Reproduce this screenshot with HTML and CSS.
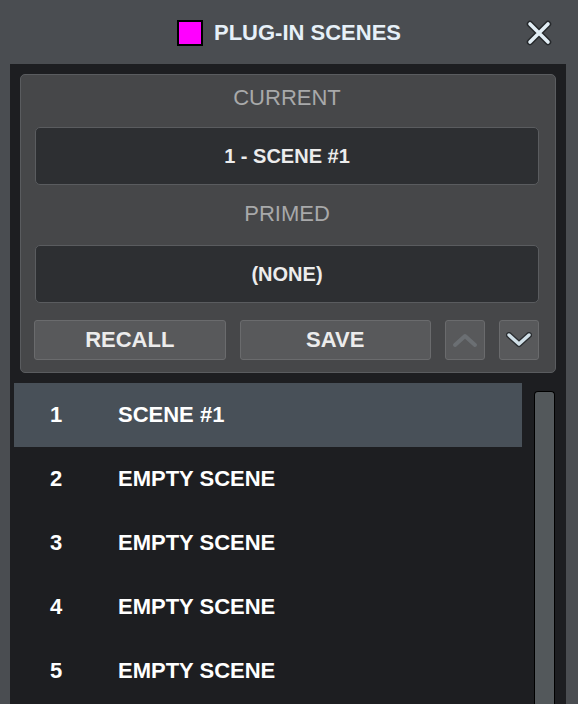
FILE: index.html
```html
<!DOCTYPE html>
<html>
<head>
    <title>Plug-in Scenes</title>
    <link rel="stylesheet" href="styles.css">
</head>
<body>
    <div class="header">
        <div></div>
        <div class="title">
            <span class="swatch"></span>
            <span>PLUG-IN SCENES</span>
        </div>
        <div class="close">
            <svg width="26" height="26" viewBox="0 0 26 26">
                <path d="M4 4 L22 22 M22 4 L4 22" stroke="#25282b" stroke-width="6.5" stroke-linecap="round" fill="none"/>
                <path d="M4 4 L22 22 M22 4 L4 22" stroke="#e2eef5" stroke-width="3.6" stroke-linecap="round" fill="none"/>
            </svg>
        </div>
    </div>

    <div class="panel">
        <div class="card">
            <div class="label first">CURRENT</div>
            <div class="display">1 - SCENE #1</div>
            <div class="label second">PRIMED</div>
            <div class="display">(NONE)</div>
            <div class="buttons">
                <button class="btn">RECALL</button>
                <button class="btn">SAVE</button>
                <button class="btn arrow">
                    <svg width="26" height="16" viewBox="0 0 26 16">
                        <path d="M3 13 L13 4 L23 13" stroke="#6b6f73" stroke-width="4" stroke-linecap="round" stroke-linejoin="round" fill="none"/>
                    </svg>
                </button>
                <button class="btn arrow">
                    <svg width="26" height="16" viewBox="0 0 26 16">
                        <path d="M3 3 L13 12 L23 3" stroke="#2a2d30" stroke-width="6" stroke-linecap="round" stroke-linejoin="round" fill="none"/>
                        <path d="M3 3 L13 12 L23 3" stroke="#d0dfe7" stroke-width="3.4" stroke-linecap="round" stroke-linejoin="round" fill="none"/>
                    </svg>
                </button>
            </div>
        </div>

        <div class="list-area">
            <div class="rows">
                <div class="row selected"><span class="num">1</span><span>SCENE #1</span></div>
                <div class="row"><span class="num">2</span><span>EMPTY SCENE</span></div>
                <div class="row"><span class="num">3</span><span>EMPTY SCENE</span></div>
                <div class="row"><span class="num">4</span><span>EMPTY SCENE</span></div>
                <div class="row"><span class="num">5</span><span>EMPTY SCENE</span></div>
            </div>
            <div class="scrollbar"></div>
        </div>
    </div>
</body>
</html>
```

FILE: styles.css
```css
html, body {
    margin: 0;
    height: 100%;
}

body {
    font-family: "Liberation Sans", Arial, sans-serif;
    background-color: #4a4d51;
    overflow: hidden;
    display: flex;
    flex-direction: column;
}

.header {
    height: 64px;
    display: grid;
    grid-template-columns: 1fr auto 1fr;
    align-items: center;
}

.title {
    display: flex;
    align-items: center;
    gap: 11px;
    font-size: 22px;
    font-weight: bold;
    color: #e6f0f8;
    margin-top: 1px;
}

.swatch {
    width: 22px;
    height: 22px;
    background-color: #ff00ff;
    border: 2px solid #000;
}

.close {
    justify-self: end;
    margin-right: 26px;
    height: 26px;
    margin-top: 2px;
}

.panel {
    flex: 1;
    margin: 0 12px 0 10px;
    padding-top: 10px;
    background-color: #1d1e21;
    display: flex;
    flex-direction: column;
    min-height: 0;
}

.card {
    margin: 0 10px;
    padding: 0 16px 12px 14px;
    border: 1px solid #5a5c5f;
    border-radius: 5px;
    background-color: #464749;
}

.label {
    text-align: center;
    font-size: 22px;
    line-height: 30px;
    color: #a8a9aa;
}

.label.first {
    padding: 8px 0 14px;
}

.label.second {
    padding: 14px 0 16px;
}

.display {
    height: 56px;
    line-height: 56px;
    text-align: center;
    font-size: 20px;
    font-weight: bold;
    color: #ececec;
    background-color: #2d2f32;
    border: 1px solid #5a5c5f;
    border-radius: 5px;
}

.buttons {
    display: grid;
    grid-template-columns: 1fr 1fr 40px 40px;
    column-gap: 14px;
    margin-top: 17px;
    margin-left: -1px;
}

.btn {
    height: 40px;
    padding: 0;
    background-color: #58595b;
    border: 1px solid #6a6b6d;
    border-radius: 3px;
    font-family: inherit;
    font-size: 22px;
    font-weight: bold;
    color: #ececec;
}

.arrow {
    display: flex;
    align-items: center;
    justify-content: center;
}

.list-area {
    flex: 1;
    display: flex;
    margin-top: 10px;
    padding-left: 4px;
    min-height: 0;
}

.rows {
    width: 508px;
}

.row {
    height: 64px;
    display: flex;
    align-items: center;
    font-size: 22px;
    font-weight: bold;
    color: #fff;
}

.row.selected {
    background-color: #485058;
}

.num {
    width: 68px;
    padding-left: 36px;
}

.scrollbar {
    width: 19px;
    margin: 8px 0 0 12px;
    background-color: #53585b;
    border: 1px solid #000;
    border-bottom: none;
    border-radius: 4px 4px 0 0;
}
```
